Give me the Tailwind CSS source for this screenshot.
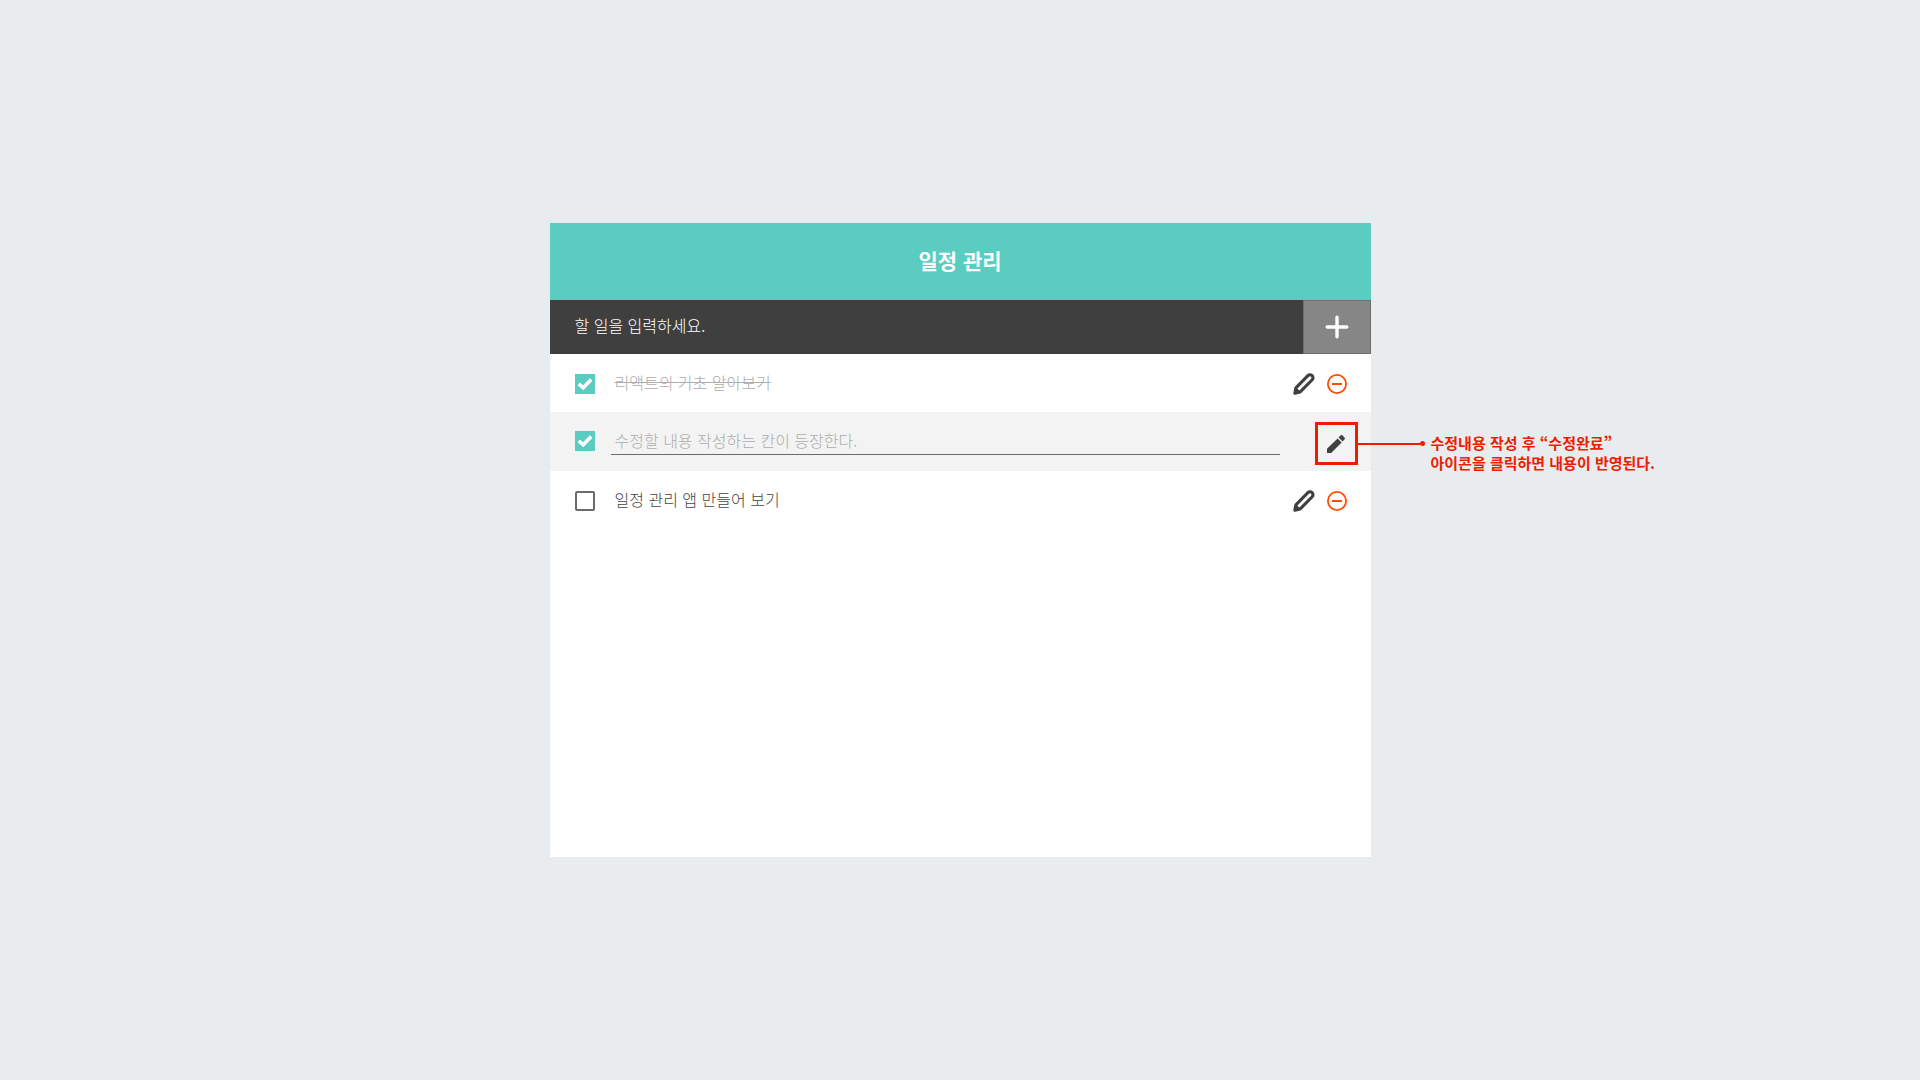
<!DOCTYPE html>
<html lang="ko">
<head>
<meta charset="utf-8">
<meta name="viewport" content="width=device-width, initial-scale=1">
<title>일정 관리</title>
<script src="https://cdn.jsdelivr.net/npm/@tailwindcss/browser@4"></script>
</head>
<body class="flex min-h-screen items-center justify-center bg-[#e8ecef] font-['Noto_Sans_CJK_KR',sans-serif] text-base leading-5 font-light text-[#444444]">
<svg class="hidden" aria-hidden="true">
  <symbol id="check" viewBox="0 0 20 20"><path d="M3.8 9.8 8.2 13.8 16.2 5.4" fill="none" stroke="#fff" stroke-width="3.6"/></symbol>
  <symbol id="pencil" viewBox="0 0 22 22"><path d="M1.8 20.2 2.9 14.9 14.9 2.7a2.9 2.9 0 0 1 4.3 4.1L7.2 18.9Z" fill="#fff" stroke="#404040" stroke-width="3.1" stroke-linejoin="round"/><path d="M2.4 19.6 4 15.2 6.8 18Z" fill="#404040"/></symbol>
  <symbol id="minus" viewBox="0 0 20 20"><circle cx="10" cy="10" r="9.1" fill="none" stroke="#ff4b00" stroke-width="1.8"/><path d="M5 10h10" stroke="#ff4b00" stroke-width="2"/></symbol>
</svg>
<main class="flex min-h-[634px] w-full max-w-[821px] flex-col bg-white">
  <header class="flex h-[77px] items-center justify-center bg-[#5acdc0] pb-1">
    <h1 class="text-[21px] leading-6 font-bold text-white">일정 관리</h1>
  </header>
  <form class="flex h-[54px] bg-[#3f3f3f]">
    <input type="text" aria-label="할 일" placeholder="할 일을 입력하세요." class="min-w-0 flex-1 pb-1 pl-[25px] font-light text-white outline-none placeholder:text-white">
    <button type="button" aria-label="추가" class="flex w-[68px] items-center justify-center border border-[#6e6e6e] bg-[#868686]">
      <svg class="size-6" viewBox="0 0 24 24" stroke="#fff" stroke-width="3.4" stroke-linecap="round"><path d="M12 2.2v19.6M2.2 12h19.6"/></svg>
    </button>
  </form>
  <ul>
    <li class="flex h-[58px] items-center pt-0.5 pr-6 pl-[25px]">
      <span class="grid *:col-start-1 *:row-start-1">
        <input id="todo1" type="checkbox" checked class="size-5 appearance-none bg-[#5acdc0]">
        <svg class="pointer-events-none size-5"><use href="#check"/></svg>
      </span>
      <label for="todo1" class="flex-1 pb-1 pl-5 text-[#adadad] line-through">리액트의 기초 알아보기</label>
      <div class="flex items-center gap-3">
        <button type="button" aria-label="수정"><svg class="size-[22px]"><use href="#pencil"/></svg></button>
        <button type="button" aria-label="삭제"><svg class="size-5"><use href="#minus"/></svg></button>
      </div>
    </li>
    <li class="flex h-[59px] items-center bg-[#f3f3f3] pr-[13px] pl-[25px]">
      <span class="grid pb-0.5 *:col-start-1 *:row-start-1">
        <input type="checkbox" checked aria-label="완료" class="size-5 appearance-none bg-[#5acdc0]">
        <svg class="pointer-events-none size-5"><use href="#check"/></svg>
      </span>
      <input type="text" aria-label="수정할 내용" placeholder="수정할 내용 작성하는 칸이 등장한다." class="mr-[35px] ml-4 h-[27px] min-w-0 flex-1 border-b border-[#6b6b6b] pb-[3px] pl-1 font-light outline-none placeholder:text-[#adadad]">
      <div class="relative mt-1">
        <button type="button" aria-label="수정완료" class="flex size-[43px] items-center justify-center border-3 border-[#f01c00]">
          <svg class="size-[18px]" viewBox="0 0 18 18" fill="#404040"><path d="M0 18v-4.2L10.6 3.4l4 4L4.2 18ZM11.6 2.4 13.4.6a1.6 1.6 0 0 1 2.2 0l1.8 1.8a1.6 1.6 0 0 1 0 2.2L15.6 6.4Z"/></svg>
        </button>
        <div class="absolute top-[11px] left-full flex items-start">
          <span class="mt-[10px] h-[2px] w-[62px] bg-[#f01c00]"></span>
          <span class="mt-2 size-[5px] rounded-full bg-[#f01c00]"></span>
          <p class="pl-1.5 text-[15px] font-bold whitespace-nowrap text-[#f01c00]">수정내용 작성 후 “수정완료”<br>아이콘을 클릭하면 내용이 반영된다.</p>
        </div>
      </div>
    </li>
    <li class="flex h-[59px] items-center pr-6 pl-[25px]">
      <input id="todo3" type="checkbox" class="size-5 appearance-none rounded-xs border-2 border-[#6b6b6b]">
      <label for="todo3" class="flex-1 pb-1 pl-5">일정 관리 앱 만들어 보기</label>
      <div class="flex items-center gap-3">
        <button type="button" aria-label="수정"><svg class="size-[22px]"><use href="#pencil"/></svg></button>
        <button type="button" aria-label="삭제"><svg class="size-5"><use href="#minus"/></svg></button>
      </div>
    </li>
  </ul>
</main>
</body>
</html>
